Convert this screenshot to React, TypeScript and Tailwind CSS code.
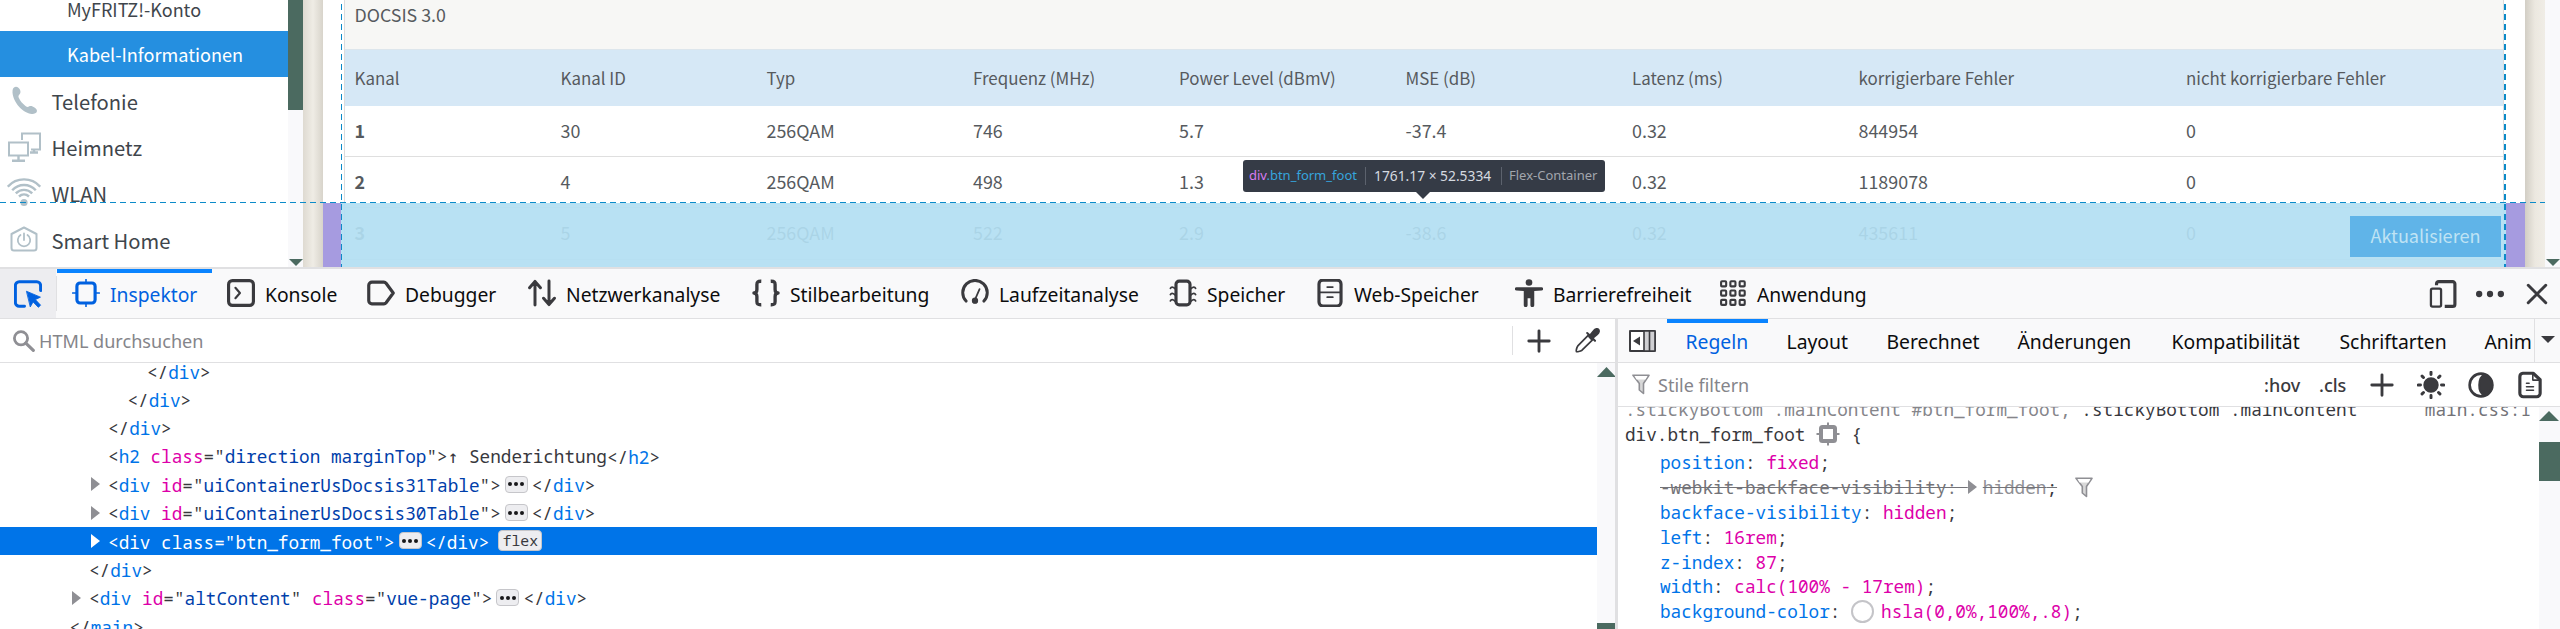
import type { ReactNode } from "react";

type Kids = { children?: ReactNode };

/* ---------- icons ---------- */

function Icon({ children, className = "size-7" }: Kids & { className?: string }) {
  return (
    <svg viewBox="0 0 16 16" className={`${className} shrink-0`} fill="none" stroke="currentColor" strokeWidth="1.6" strokeLinecap="round" strokeLinejoin="round">
      {children}
    </svg>
  );
}

const PickerIcon = () => (
  <Icon>
    <path d="M6 15H3a2.2 2.2 0 0 1-2.2-2.2V3.200A2.200 2.200 0 0 1 3 1h10a2.200 2.200 0 0 1 2.200 2.200V6" strokeWidth="1.7" />
    <path d="M7.300 6.500l7.800 3.300-2.900 1.400 3 3.200-1.300 1.200-3-3.100-1.500 2.700z" fill="currentColor" strokeWidth=".5" />
  </Icon>
);
const InspectorIcon = () => (
  <Icon>
    <rect x="2.800" y="2.300" width="10.400" height="11.400" rx="1.800" strokeWidth="1.800" />
    <path d="M8 .2v2M8 13.800v2M.4 8h2M13.600 8h2" strokeWidth=".9" />
  </Icon>
);
const ConsoleIcon = () => (
  <Icon>
    <rect x=".9" y=".9" width="14.200" height="14.200" rx="2.200" strokeWidth="1.800" />
    <path d="M4.800 5L7.400 8 4.800 11" strokeWidth="1.200" />
  </Icon>
);
const DebuggerIcon = () => (
  <Icon>
    <path d="M2.800 1.800H9.600a1.600 1.600 0 0 1 1.300.6L15 8l-4.100 5.600a1.600 1.600 0 0 1-1.300.6H2.800A1.800 1.800 0 0 1 1 12.400V3.600a1.800 1.800 0 0 1 1.800-1.800z" strokeWidth="1.800" />
  </Icon>
);
const NetworkIcon = () => (
  <Icon>
    <path d="M4 14.800V1.400M.9 5L4 1.400 7.100 5M12 1.200V14.600M8.900 11L12 14.600 15.100 11" strokeWidth="1.700" />
  </Icon>
);
const BracesIcon = () => (
  <Icon>
    <path d="M5.300 1.300C3.200 1.200 2.800 1.800 2.800 3.200V6c0 1.200-.6 2-1.700 2 1.100 0 1.700.8 1.700 2v2.800c0 1.400.4 2 2.500 1.900M10.700 1.300c2.100-.1 2.500.5 2.500 1.900V6c0 1.200.6 2 1.700 2-1.100 0-1.700.8-1.700 2v2.800c0 1.400-.4 2-2.500 1.900" strokeWidth="1.900" strokeLinecap="butt" />
  </Icon>
);
const GaugeIcon = () => (
  <Icon>
    <path d="M2.900 12.600A7 7 0 1 1 13.100 12.600" strokeWidth="1.700" />
    <path d="M8 11.800L10.600 5.800" strokeWidth="1" />
    <circle cx="8" cy="12.400" r="1.500" fill="currentColor" strokeWidth=".6" />
  </Icon>
);
const MemoryIcon = () => (
  <Icon>
    <rect x="4" y="1.200" width="8" height="13.600" rx="1.800" strokeWidth="1.800" />
    <path d="M3.400 5.400Q1.500 3.900.8 5.300M3.400 9Q1.500 7.500.8 8.900M3.400 12.600Q1.500 11.100.8 12.500M12.600 5.400Q14.500 3.900 15.200 5.300M12.600 9Q14.500 7.500 15.200 8.900M12.600 12.600Q14.500 11.100 15.200 12.500" strokeWidth="1" />
  </Icon>
);
const StorageIcon = () => (
  <Icon>
    <rect x="1.700" y=".6" width="12.600" height="14.800" rx="2.200" strokeWidth="1.800" />
    <path d="M2 7.600H14M6.400 4.600h3.200M6.400 10.400h3.200" strokeWidth="1" />
  </Icon>
);
const PersonIcon = () => (
  <Icon>
    <g fill="currentColor" stroke="none">
      <circle cx="8" cy="2" r="1.900" />
      <path d="M.8 4.700h14.400a.9.900 0 0 1 0 1.800L11 6.800V15a1.100 1.100 0 0 1-2.200 0V11H7.200v4A1.100 1.100 0 0 1 5 15V6.800L.8 6.500a.9.900 0 0 1 0-1.800z" />
    </g>
  </Icon>
);
const GridIcon = () => (
  <Icon>
    <g strokeWidth="1.200">
      {[1.300, 6.600, 11.900].map((y) =>
        [1.200, 6.500, 11.800].map((x) => <rect key={`${x}-${y}`} x={x} y={y} width="2.900" height="2.900" rx=".5" />)
      )}
    </g>
  </Icon>
);
const DevicesIcon = () => (
  <Icon>
    <path d="M4.300 3V2.100A1.300 1.300 0 0 1 5.600.9H13.500a1.300 1.300 0 0 1 1.300 1.300V13.800a1.300 1.300 0 0 1-1.300 1.300H9" strokeLinecap="butt" strokeWidth="1.800" />
    <rect x="1.100" y="4.900" width="5.800" height="10.300" rx=".9" strokeWidth="1.300" />
  </Icon>
);
const PlusIcon = () => (
  <Icon className="size-6">
    <path d="M8 1.200V14.800M1.200 8H14.800" strokeWidth="1.900" />
  </Icon>
);
const FunnelIcon = () => (
  <svg viewBox="0 0 18 21" className="h-[21px] w-[18px] shrink-0" fill="#d8d8d8" stroke="#8f8f94" strokeWidth="1.600" strokeLinejoin="round">
    <path d="M1 1.200H17L11.500 9.500V19.500L7.300 16V9.500z" />
    <path d="M2.500 2H15.500L13.500 5.500H4.500z" fill="#fff" stroke="none" />
  </svg>
);
const HighlightIcon = () => (
  <svg viewBox="0 0 24 24" className="h-6 w-6 shrink-0" fill="none" stroke="#8f8f94">
    <rect x="5" y="5" width="14" height="14" rx="1.500" strokeWidth="4" />
    <path d="M12 .5V4M12 20v3.500M.5 12H4M20 12h3.500" strokeWidth="2" />
  </svg>
);

const SunIcon = () => (
  <Icon>
    <circle cx="8" cy="8" r="3.900" fill="currentColor" strokeWidth="1" />
    <path d="M8 .7v1.300M8 14v1.300M.7 8H2M14 8h1.300M2.900 2.900l.8.8M12.300 12.300l.8.8M2.900 13.100l.8-.8M12.300 3.700l.8-.8" strokeWidth="1.700" />
  </Icon>
);
const ContrastIcon = () => (
  <Icon>
    <circle cx="8" cy="8" r="6.500" strokeWidth="1.500" />
    <path d="M10 2.200C6.200 3.400 5.600 12.600 10 13.800A6 6 0 0 0 10 2.200z" fill="currentColor" strokeWidth="1" />
  </Icon>
);
const PageIcon = () => (
  <Icon>
    <path d="M4 1.300H9.800L13.800 5V12.600A2 2 0 0 1 11.800 14.700H4.200A2 2 0 0 1 2.200 12.600V3.300A2 2 0 0 1 4 1.300z" strokeWidth="1.800" />
    <path d="M9.600 1.600V5.200H13.400M6 7h1.500M6 9h4M6 11h4" strokeWidth=".9" />
  </Icon>
);

const PhoneIcon = () => (
  <svg viewBox="0 0 33 33" className="h-[33px] w-[33px]" fill="#b1c0c8">
    <path d="M4.500 8.500C4.300 4.800 5.600 2.900 7.800 2.700c1.900-.1 3.500 1.500 4.300 3.400.7 2 .4 3.500-.9 4.600-.9.800-.9 1.700-.4 3.100 1.300 3.200 3.700 5.900 6.700 8.100 1.400 1 2.300 1.300 3.400.6 1.700-1 3.700-.4 5.600 1.100 1.900 1.400 2.900 2.700 2.300 4.100-.6 1.500-2.600 2.400-5 2.200C15 29.200 5.200 18.500 4.500 8.500z" />
  </svg>
);
const MonitorsIcon = () => (
  <svg viewBox="0 0 33 30" className="h-[30px] w-[33px]" fill="none" stroke="#b1c0c8" strokeWidth="2">
    <path d="M14 8V1.500H32V17.500H23" />
    <rect x="1" y="10.500" width="19" height="13" />
    <path d="M10.500 24v4M4 28.800h13M26 17v3.500M22 20.500h8" strokeWidth="2.400" />
  </svg>
);
const WifiIcon = () => (
  <svg viewBox="0 0 34 29" className="h-[29px] w-[34px]" fill="none" stroke="#b1c0c8" strokeWidth="2.400">
    <path d="M.8 8.600C9.500-1 24.500-1 33.200 8.600M5.200 12.200c6.500-7 17.100-7 23.600 0M8.800 15.300c4.600-4.600 11.800-4.600 16.400 0M12 18.500c3-2.800 7-2.800 10 0" />
    <circle cx="17" cy="24.500" r="3.600" fill="#b1c0c8" stroke="none" />
  </svg>
);
const HomeIcon = () => (
  <svg viewBox="0 0 28 26" className="h-[26px] w-[28px]" fill="none" stroke="#b1c0c8" strokeWidth="2" strokeLinejoin="round" strokeLinecap="round">
    <path d="M1.500 8L14 1.500 26.500 8V22a2.500 2.500 0 0 1-2.500 2.500H4A2.500 2.500 0 0 1 1.500 22z" />
    <path d="M10.500 9a6.200 6.200 0 1 0 7 0M14 7.500V14" strokeWidth="1.800" />
  </svg>
);

/* ---------- router page ---------- */

function NavItem({ icon, label }: { icon: ReactNode; label: string }) {
  return (
    <div className="flex h-[46.400px] items-center text-[20.200px]">
      <div className="flex w-[49px] shrink-0 justify-center pr-px">{icon}</div>
      <span className="pl-[2.500px] pt-[3px]">{label}</span>
    </div>
  );
}

function Sidebar() {
  return (
    <div className="flex w-[303px] shrink-0 bg-white text-[#3f464c]">
      <div className="w-[288px]">
        <div className="flex h-[31px] items-start pl-[67px] text-[18px] leading-[18px]">MyFRITZ!-Konto</div>
        <div className="flex h-[46px] items-center bg-[#258fe0] pl-[67px] pt-px text-[18.100px] text-white">Kabel-Informationen</div>
        <NavItem icon={<PhoneIcon />} label="Telefonie" />
        <NavItem icon={<MonitorsIcon />} label="Heimnetz" />
        <NavItem icon={<WifiIcon />} label="WLAN" />
        <NavItem icon={<HomeIcon />} label="Smart Home" />
      </div>
      <div className="flex w-[15px] flex-col items-center justify-between bg-[#f9f9fb] pb-[1px]">
        <div className="h-[110px] w-full bg-[#4b6a60]" />
        <svg viewBox="0 0 14 7" className="h-[7px] w-[14px]" fill="#4b6a60"><path d="M0 0H14L7 7z" /></svg>
      </div>
    </div>
  );
}

const COLS = "grid grid-cols-[206px_206px_206.500px_206px_226.500px_226.500px_226.500px_327.500px_1fr] items-center pl-[9.500px]";
const HEAD = ["Kanal", "Kanal ID", "Typ", "Frequenz (MHz)", "Power Level (dBmV)", "MSE (dB)", "Latenz (ms)", "korrigierbare Fehler", "nicht korrigierbare Fehler"];
const ROWS = [
  ["1", "30", "256QAM", "746", "5.7", "-37.4", "0.32", "844954", "0"],
  ["2", "4", "256QAM", "498", "1.3", "", "0.32", "1189078", "0"],
  ["3", "5", "256QAM", "522", "2.9", "-38.6", "0.32", "435611", "0"],
];

function Table() {
  return (
    <div className="ml-[21px] w-[2160px] border-x border-[#dcdcdc] text-[#565a5e]">
      <div className="h-[49px] bg-[#f7f7f5] pl-[9.500px] text-[17.800px] leading-[28px]">DOCSIS 3.0</div>
      <div className={`${COLS} h-[57px] border-t border-[#dde6ec] bg-[#d6e8f6] text-[16.900px]`}>
        {HEAD.map((h) => <span key={h}>{h}</span>)}
      </div>
      {ROWS.map((r) => (
        <div key={r[0]} className={`${COLS} h-[51.200px] border-b border-[#dfdfdf] pb-[2px] text-[17.900px]`}>
          {r.map((c, i) => <span key={i} className={i === 0 ? "font-bold" : ""}>{c}</span>)}
        </div>
      ))}
    </div>
  );
}

function Highlighter() {
  return (
    <>
      <div className="absolute left-[323px] top-[203px] flex h-16 w-[2202px]">
        <div className="w-[18px] bg-[#a69be0]" />
        <div className="flex w-[2165px] bg-white/80">
          <div className="flex flex-1 items-start justify-end bg-[#89cdeb]/60 pr-[5px] pt-[13px]">
            <div className="flex h-[41px] w-[151px] items-center justify-center bg-[#60b4e8] pb-[2px] text-[18.100px] text-[#bfe3f4]">Aktualisieren</div>
          </div>
        </div>
        <div className="flex-1 bg-[#a69be0]" />
      </div>
      <div className="absolute left-0 top-[202px] h-px w-[2545px] bg-[repeating-linear-gradient(90deg,#0b8bc9_0_6px,transparent_6px_10px)]" />
      <div className="absolute left-[341px] top-[4px] h-[263px] w-px bg-[repeating-linear-gradient(180deg,#0b8bc9_0_6px,transparent_6px_10px)]" />
      <div className="absolute left-[2504px] top-[4px] h-[263px] w-[2px] bg-[repeating-linear-gradient(180deg,#0b8bc9_0_6px,transparent_6px_10px)]" />
      <div className="absolute left-[1243px] top-[160px] flex h-[32px] w-[362px] items-center rounded-[3px] bg-[#353b46] pl-[6px] font-['Noto_Sans',sans-serif] text-[13px]">
        <span className="w-[116px] text-[#36a5dd]"><span className="text-[#d77bf2]">div</span>.btn_form_foot</span>
        <span className="h-[18px] w-[9px] border-l border-[#5c626d]" />
        <span className="w-[127px] text-[13.800px] text-[#d5dae0]">1761.17 × 52.5334</span>
        <span className="h-[18px] w-[8px] border-l border-[#5c626d]" />
        <span className="whitespace-nowrap text-[#a2a6ad]">Flex-Container</span>
        <svg viewBox="0 0 16 8" className="absolute left-[172px] top-[31px] h-2 w-4" fill="#353b46"><path d="M0 0H16L8 8z" /></svg>
      </div>
    </>
  );
}

function RouterPage() {
  return (
    <div className="relative flex h-[267px] shrink-0 overflow-hidden bg-[#efece5] font-['Noto_Sans_CJK_SC',sans-serif]">
      <Sidebar />
      <div className="w-5 shrink-0 bg-linear-to-r from-[#dedad1] via-[#efece5] to-[#d8d4cb]" />
      <div className="w-[2202px] shrink-0 bg-white"><Table /></div>
      <div className="w-5 shrink-0 bg-linear-to-r from-[#d2cec5] via-[#ece8e0] to-[#f0ede6]" />
      <div className="flex flex-1 flex-col items-center justify-end bg-[#f9f9fb] pb-[1px]">
        <svg viewBox="0 0 14 7" className="h-[7px] w-[14px]" fill="#4b6a60"><path d="M0 0H14L7 7z" /></svg>
      </div>
      <Highlighter />
    </div>
  );
}

/* ---------- toolbox ---------- */

function ToolTab({ icon, label, width, active = false }: { icon: ReactNode; label: string; width: string; active?: boolean }) {
  return (
    <div className={`${width} flex shrink-0 items-center border-t-4 pb-1 pl-[14.500px] ${active ? "border-[#0a84ff] text-[#0061e0]" : "border-transparent text-[#0c0c0d]"}`}>
      <span className={`flex -translate-y-px ${active ? "" : "text-[#3a3a3e]"}`}>{icon}</span>
      <span className="whitespace-nowrap pl-[10.500px] pt-[3px]">{label}</span>
    </div>
  );
}

function Toolbar() {
  return (
    <div className="flex h-[52px] shrink-0 border-b border-t-2 border-[#e0e0e2] bg-[#f9f9fa] text-[19.300px]">
      <div className="flex w-[56px] items-center justify-center bg-[#ededf0] text-[#0061e0]"><PickerIcon /></div>
      <div className="my-[7px] w-px bg-[#e0e0e2]" />
      <ToolTab active icon={<InspectorIcon />} label="Inspektor" width="w-[155px]" />
      <ToolTab icon={<ConsoleIcon />} label="Konsole" width="w-[140px]" />
      <ToolTab icon={<DebuggerIcon />} label="Debugger" width="w-[161px]" />
      <ToolTab icon={<NetworkIcon />} label="Netzwerkanalyse" width="w-[224px]" />
      <ToolTab icon={<BracesIcon />} label="Stilbearbeitung" width="w-[209px]" />
      <ToolTab icon={<GaugeIcon />} label="Laufzeitanalyse" width="w-[208px]" />
      <ToolTab icon={<MemoryIcon />} label="Speicher" width="w-[147px]" />
      <ToolTab icon={<StorageIcon />} label="Web-Speicher" width="w-[199px]" />
      <ToolTab icon={<PersonIcon />} label="Barrierefreiheit" width="w-[204px]" />
      <ToolTab icon={<GridIcon />} label="Anwendung" width="w-[178px]" />
      <div className="flex flex-1 items-center justify-end gap-[18px] pr-[9px] text-[#3a3a3e]">
        <DevicesIcon />
        <Icon className="h-7 w-[30px]"><g fill="currentColor" stroke="none"><circle cx="1.800" cy="8" r="1.800" /><circle cx="8" cy="8" r="1.800" /><circle cx="14.200" cy="8" r="1.800" /></g></Icon>
        <Icon><path d="M3 3L13 13M13 3L3 13" strokeWidth="1.700" /></Icon>
      </div>
    </div>
  );
}

/* ---------- markup view ---------- */

const Tag = ({ children }: Kids) => <span className="text-[#0074e8] group-data-[on=true]:text-white">{children}</span>;
const Attr = ({ name, value }: { name: string; value: string }) => (
  <>
    {" "}
    <span className="text-[#dd00a9] group-data-[on=true]:text-white">{name}</span>="
    <span className="text-[#003eaa] group-data-[on=true]:text-white">{value}</span>"
  </>
);
const Close = ({ tag = "div" }: { tag?: string }) => <span>&lt;/<Tag>{tag}</Tag>&gt;</span>;
const More = () => (
  <span className="mx-[4px] -mt-[2px] flex h-[17px] w-[23px] items-center justify-center gap-[2px] rounded-[4px] border border-[#c6c6ca] bg-[#ededf0]">
    <i className="size-[4px] rounded-full bg-[#18181a]" />
    <i className="size-[4px] rounded-full bg-[#18181a]" />
    <i className="size-[4px] rounded-full bg-[#18181a]" />
  </span>
);

function Line({ children, indent, arrow = false, on = false }: Kids & { indent: string; arrow?: boolean; on?: boolean }) {
  return (
    <div data-on={on} className={`group flex h-[28.300px] shrink-0 items-center whitespace-pre pt-[2px] ${indent} ${on ? "bg-[#0074e8] text-white" : "text-[#38383d]"}`}>
      <span className="w-[17px] shrink-0">
        {arrow && <svg viewBox="0 0 9 14" className="-mt-[2px] h-[14px] w-[9px]" fill={on ? "#fff" : "#8f8f94"}><path d="M0 0L9 7 0 14z" /></svg>}
      </span>
      {children}
    </div>
  );
}

function MarkupView() {
  return (
    <div className="flex w-[1615px] shrink-0 flex-col">
      <div className="flex h-[44px] shrink-0 items-center border-b border-[#e0e0e2] pl-[12px] text-[18.100px] text-[#85858a]">
        <svg viewBox="0 0 23 22" className="h-[22px] w-[23px]" fill="none" stroke="#8f8f94" strokeWidth="2.800" strokeLinecap="round">
          <circle cx="9" cy="8.300" r="6.600" />
          <path d="M13.800 13.200L21.300 20.300" strokeWidth="3.200" />
        </svg>
        <span className="pl-[4px] pt-[3px]">HTML durchsuchen</span>
        <div className="ml-auto h-[29px] w-px bg-[#e0e0e2]" />
        <div className="flex w-[102px] items-center gap-[24px] pl-[14px] text-[#3a3a3e]">
          <PlusIcon />
          <Icon className="size-[25px]">
            <path d="M8.900 4.300L1.800 11.500C1 12.600.6 14.800.9 15.100 1.200 15.400 3.400 15 4.500 14.200L11.700 7.100" strokeWidth="1.100" />
            <path d="M7.800 3.200l5 5M9 5.500L12 1.800c1-1.400 2.600-1.300 3-.8s.6 2-.8 3L10.500 7z" fill="currentColor" strokeWidth="1.300" />
          </Icon>
        </div>
      </div>
      <div className="flex min-h-0 flex-1">
        <div className="flex min-w-0 flex-1 flex-col overflow-hidden font-['Noto_Sans_Mono',monospace] text-[17.700px]">
          <div className="-mt-[6px] flex flex-col">
            <Line indent="pl-[130px]"><Close /></Line>
            <Line indent="pl-[110.500px]"><Close /></Line>
            <Line indent="pl-[91px]"><Close /></Line>
            <Line indent="pl-[91px]"><span>&lt;<Tag>h2</Tag><Attr name="class" value="direction marginTop" />&gt;<span className="font-['DejaVu_Sans_Mono',monospace]">↑</span> Senderichtung</span><Close tag="h2" /></Line>
            <Line arrow indent="pl-[91px]"><span>&lt;<Tag>div</Tag><Attr name="id" value="uiContainerUsDocsis31Table" />&gt;</span><More /><Close /></Line>
            <Line arrow indent="pl-[91px]"><span>&lt;<Tag>div</Tag><Attr name="id" value="uiContainerUsDocsis30Table" />&gt;</span><More /><Close /></Line>
            <Line on arrow indent="pl-[91px]">
              <span>&lt;<Tag>div</Tag><Attr name="class" value="btn_form_foot" />&gt;</span><More /><Close />
              <span className="-mt-[2px] ml-[9px] flex h-[21px] w-[44px] items-center justify-center rounded-[4px] border border-[#c6c6ca] bg-[#ededf0] pb-[2px] text-[14.800px] text-[#38383d]">flex</span>
            </Line>
            <Line indent="pl-[72px]"><Close /></Line>
            <Line arrow indent="pl-[72px]"><span>&lt;<Tag>div</Tag><Attr name="id" value="altContent" /><Attr name="class" value="vue-page" />&gt;</span><More /><Close /></Line>
            <Line indent="pl-[52.500px]"><Close tag="main" /></Line>
          </div>
        </div>
        <div className="flex w-[18px] flex-col justify-between bg-[#f9f9fb] pt-[4px]">
          <svg viewBox="0 0 18 10" className="h-[10px] w-[18px]" fill="#4b6a60"><path d="M0 10L9.500 0 18 9V10z" /></svg>
          <div className="h-[6px] bg-[#4b6a60]" />
        </div>
      </div>
    </div>
  );
}

/* ---------- rule view ---------- */

function SideTab({ label, width, active = false }: { label: string; width: string; active?: boolean }) {
  return (
    <div className={`${width} flex shrink-0 items-center overflow-hidden whitespace-nowrap border-t-4 pb-[2px] pl-[18.500px] ${active ? "border-[#0a84ff] text-[#0061e0]" : "border-transparent text-[#0c0c0d]"}`}>
      {label}
    </div>
  );
}

const Decl = ({ name, children }: Kids & { name: string }) => (
  <div className="flex h-[24.800px] items-center whitespace-pre pl-[35px]">
    <span className="text-[#0074e8]">{name}</span>:{" "}
    <span className="flex items-center text-[#dd00a9]">{children}</span>;
  </div>
);

function RuleView() {
  return (
    <div className="flex min-w-0 flex-1 flex-col">
      <div className="flex h-[44px] shrink-0 border-b border-[#e0e0e2] bg-[#f9f9fa] text-[19.350px]">
        <div className="flex w-[49px] items-center pl-[11px]">
          <svg viewBox="0 0 27 22" className="h-[22px] w-[27px]">
            <rect x="1" y="1" width="25" height="20" rx="1" fill="#fff" stroke="#3a3a3e" strokeWidth="1.800" />
            <path d="M15 1H26V21H15z" fill="#d0d0d3" />
            <path d="M15 1V21M20.500 1V21M1 1H26V21H1z" stroke="#3a3a3e" strokeWidth="1.600" fill="none" />
            <path d="M4 11L11 6.500V15.500z" fill="#3a3a3e" />
          </svg>
        </div>
        <SideTab active label="Regeln" width="w-[101px]" />
        <SideTab label="Layout" width="w-[100px]" />
        <SideTab label="Berechnet" width="w-[131px]" />
        <SideTab label="Änderungen" width="w-[154px]" />
        <SideTab label="Kompatibilität" width="w-[168px]" />
        <SideTab label="Schriftarten" width="w-[145px]" />
        <SideTab label="Anim" width="w-[68px]" />
        <div className="flex flex-1 items-center justify-center border-l border-[#e0e0e2]">
          <svg viewBox="0 0 14 7" className="-mt-[3px] h-[7px] w-[14px]" fill="#3a3a3e"><path d="M0 0H14L7 7z" /></svg>
        </div>
      </div>
      <div className="flex h-[44px] shrink-0 items-center border-b border-[#e0e0e2] pl-[14px] text-[18px] text-[#85858a]">
        <FunnelIcon />
        <span className="pl-[8px] pt-[2px]">Stile filtern</span>
        <div className="ml-auto flex items-center text-[#3a3a3e]">
          <span className="w-[55px] pt-[2px] font-medium">:hov</span>
          <span className="w-[51px] pt-[2px] font-medium">.cls</span>
          <PlusIcon />
          <span className="flex pl-[23px]"><SunIcon /></span>
          <span className="flex pl-[22px]"><ContrastIcon /></span>
          <span className="flex pl-[21px] pr-[16px]"><PageIcon /></span>
        </div>
      </div>
      <div className="flex min-h-0 flex-1">
        <div className="min-w-0 flex-1 overflow-hidden pl-[7px] font-['Noto_Sans_Mono',monospace] text-[17.700px] text-[#38383d]">
          <div className="-mt-[10px] flex h-[24.600px] items-center justify-between whitespace-pre pr-[8px]">
            <span><span className="text-[#85858a]">.stickyBottom .mainContent #btn_form_foot, </span>.stickyBottom .mainContent</span>
            <span className="text-[#737378]">main.css:1</span>
          </div>
          <div className="mb-[4px] flex h-[24.600px] items-center gap-[11px]">
            <span>div.btn_form_foot</span><HighlightIcon /><span>{"{"}</span>
          </div>
          <Decl name="position">fixed</Decl>
          <div className="flex h-[24.800px] items-center whitespace-pre pl-[35px] text-[#737378]">
            <span className="line-through">-webkit-backface-visibility: </span>
            <svg viewBox="0 0 9 14" className="mr-[6px] h-[14px] w-[9px]" fill="#8f8f94"><path d="M0 0L9 7 0 14z" /></svg>
            <span className="line-through"><span className="text-[#909095]">hidden</span><span className="text-[#38383d]">;</span></span>
            <span className="flex pl-[18px]"><FunnelIcon /></span>
          </div>
          <Decl name="backface-visibility">hidden</Decl>
          <Decl name="left">16rem</Decl>
          <Decl name="z-index">87</Decl>
          <Decl name="width">calc(100% - 17rem)</Decl>
          <Decl name="background-color">
            <i className="mr-[7px] size-[23px] rounded-full border-2 border-[#c4c4c8] bg-white" />hsla(0,0%,100%,.8)
          </Decl>
          <div className="leading-[24.800px]">{"}"}</div>
        </div>
        <div className="flex w-[21px] flex-col bg-[#f9f9fb] pt-[4px]">
          <svg viewBox="0 0 20 10" className="h-[10px] w-[20px]" fill="#4b6a60"><path d="M0 10L10 0 20 10z" /></svg>
          <div className="mt-[21px] h-[39px] bg-[#4b6a60]" />
        </div>
      </div>
    </div>
  );
}

export default function App() {
  return (
    <div className="flex h-[629px] w-[2560px] flex-col overflow-hidden bg-white font-['Noto_Sans',sans-serif]">
      <RouterPage />
      <Toolbar />
      <div className="flex min-h-0 flex-1">
        <MarkupView />
        <div className="w-[3px] shrink-0 bg-[#e0e0e2]" />
        <RuleView />
      </div>
    </div>
  );
}
